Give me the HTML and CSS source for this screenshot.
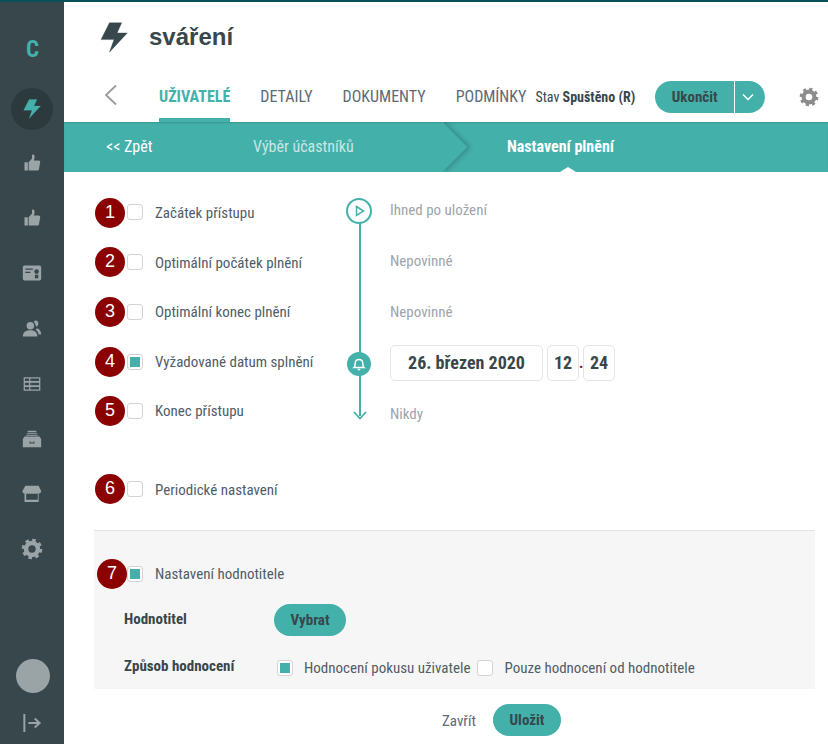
FILE: index.html
```html
<!DOCTYPE html>
<html lang="cs">
<head>
    <meta charset="UTF-8">
    <title>sváření</title>
    <link rel="stylesheet" href="styles.css">
</head>
<body>
<div class="app">
    <!-- left menu -->
    <nav class="sidebar">
        <div class="brand">C</div>
        <div class="side-item side-active">
            <svg class="side-bolt" viewBox="0 0 80 88"><polygon points="27,2 62,2 49,31 78,31 27,86 40,50 3,50"/></svg>
        </div>
        <div class="side-item">
            <svg class="side-icon" viewBox="0 0 24 24"><path d="M3 11h4v10H3zM8 11l4-4.500V2.500c0-1 2.500-1 3 1 .4 1.700-.2 3.500-.7 5.500H20c1.300 0 2 1 1.800 2.200l-1.400 8.300c-.2 1-1 1.500-2 1.500H8z"/></svg>
        </div>
        <div class="side-item">
            <svg class="side-icon" viewBox="0 0 24 24"><path d="M3 11h4v10H3zM8 11l4-4.500V2.500c0-1 2.500-1 3 1 .4 1.700-.2 3.500-.7 5.500H20c1.300 0 2 1 1.800 2.200l-1.400 8.300c-.2 1-1 1.500-2 1.500H8z"/></svg>
        </div>
        <div class="side-item">
            <svg class="side-icon" viewBox="0 0 24 24"><path fill-rule="evenodd" d="M3 3h18a2 2 0 0 1 2 2v14a2 2 0 0 1-2 2H3a2 2 0 0 1-2-2V5a2 2 0 0 1 2-2zm1 3.500V8h9V6.500zm0 4V12h6v-1.500zm13.500-3a2.800 2.800 0 1 0 0 5.600 2.800 2.800 0 0 0 0-5.600zM15.500 14v5l2-1 2 1v-5z"/></svg>
        </div>
        <div class="side-item">
            <svg class="side-icon" viewBox="0 0 24 24"><circle cx="10" cy="8" r="4.500"/><path d="M1 21c0-5 3-7.500 9-7.500s8 2.500 8.500 7.500z"/><path d="M14 3c3-2.500 6-.5 5.500 3-.2 1.500-.8 2.500-1.800 3.200C16.500 9 16 5 14 3zM18 11c3 1 5 3.500 5 7.500h-3c-.5-2.500-1.500-4-3.500-5.500z"/></svg>
        </div>
        <div class="side-item">
            <svg class="side-icon" viewBox="0 0 24 24"><path fill-rule="evenodd" d="M2 4h20v16H2zm1.500 1.500v3h5v-3zm6.500 0v3h10.500v-3zM3.500 10.500v3h5v-3zm6.500 0v3h10.500v-3zM3.500 15.500v3h5v-3zm6.500 0v3h10.500v-3z"/></svg>
        </div>
        <div class="side-item">
            <svg class="side-icon" viewBox="0 0 24 24"><path fill-rule="evenodd" d="M1 12l2-3h18l2 3v10H1zm8 3v2.500h6V15h-1.300v1.200h-3.400V15zM5 7.500h14l.6 1H4.400zM6 5h12l.5 1.200h-13zM7 2h10l.5 1.800h-11z"/></svg>
        </div>
        <div class="side-item">
            <svg class="side-icon" viewBox="0 0 24 24"><path fill-rule="evenodd" d="M4 2h16l3 6.500c0 2-1.500 3-3 3v10H3v-10c-1.500 0-2.500-1-2.500-3zm2.500 9.500c-.5.300-1 .5-1.500.4v7.100h14v-7.100c-.5 0-1-.1-1.500-.4-1 .8-1.800.8-2.700 0-1 .8-1.800.8-2.800 0-1 .8-1.800.8-2.800 0-.8.800-1.700.8-2.700 0z"/></svg>
        </div>
        <div class="side-item">
            <svg class="side-icon side-gear" viewBox="0 0 24 24"><circle cx="12" cy="12" r="6.500" class="gear-ring"/><circle cx="12" cy="12" r="9.500" class="gear-teeth"/></svg>
        </div>
        <div class="side-bottom">
            <div class="avatar"></div>
            <svg class="logout" viewBox="0 0 20 20"><path d="M1.500 0v20"/><path d="M6 10h12.500M13 5l5.500 5-5.500 5"/></svg>
        </div>
    </nav>

    <main class="main">
        <header class="title-row">
            <svg class="title-bolt" viewBox="0 0 80 88"><polygon points="27,2 62,2 49,31 78,31 27,86 40,50 3,50"/></svg>
            <h1>sváření</h1>
        </header>

        <div class="tabs">
            <svg class="back" viewBox="0 0 14 22"><path d="M12 1.500L2 11l10 9.500"/></svg>
            <a class="tab tab-active">UŽIVATELÉ</a>
            <a class="tab">DETAILY</a>
            <a class="tab">DOKUMENTY</a>
            <a class="tab">PODMÍNKY</a>
            <div class="state">Stav <b>Spuštěno (R)</b></div>
            <div class="split-btn">
                <span class="split-main">Ukončit</span>
                <span class="split-arrow"><svg viewBox="0 0 12 8"><path d="M1 1.500l5 5 5-5"/></svg></span>
            </div>
            <svg class="tab-gear" viewBox="0 0 24 24"><circle cx="12" cy="12" r="6.500" class="gear-ring"/><circle cx="12" cy="12" r="9.500" class="gear-teeth"/></svg>
        </div>

        <div class="steps">
            <div class="step-arrow"></div>
            <a class="step-back">&lt;&lt; Zpět</a>
            <span class="step-prev">Výběr účastníků</span>
            <span class="step-current">Nastavení plnění</span>
        </div>

        <section class="form">
            <div class="timeline">
                <div class="tl-line"></div>
                <svg class="tl-end" viewBox="0 0 14 9"><path d="M1 1l6 6.500L13 1"/></svg>

                <div class="row row-1">
                    <span class="badge">1</span>
                    <span class="check"></span>
                    <span class="label">Začátek přístupu</span>
                    <span class="node node-play"><svg viewBox="0 0 10 12"><path d="M1.500 1.500l7 4.500-7 4.500z"/></svg></span>
                    <span class="value">Ihned po uložení</span>
                </div>
                <div class="row row-2">
                    <span class="badge">2</span>
                    <span class="check"></span>
                    <span class="label">Optimální počátek plnění</span>
                    <span class="node"></span>
                    <span class="value">Nepovinné</span>
                </div>
                <div class="row row-3">
                    <span class="badge">3</span>
                    <span class="check"></span>
                    <span class="label">Optimální konec plnění</span>
                    <span class="node"></span>
                    <span class="value">Nepovinné</span>
                </div>
                <div class="row row-4">
                    <span class="badge">4</span>
                    <span class="check checked"></span>
                    <span class="label">Vyžadované datum splnění</span>
                    <span class="node node-bell"><svg viewBox="0 0 14 14"><path d="M2 10.500c1-1 1.200-2 1.200-4C3.200 4 5 2.500 7 2.500s3.800 1.500 3.800 4c0 2 .2 3 1.200 4zM5.800 12.500h2.400"/></svg></span>
                    <span class="date-box date-main">26. březen 2020</span>
                    <span class="date-box date-time">12</span>
                    <span class="date-dot">.</span>
                    <span class="date-box date-time">24</span>
                </div>
                <div class="row row-5">
                    <span class="badge">5</span>
                    <span class="check"></span>
                    <span class="label">Konec přístupu</span>
                    <span class="node"></span>
                    <span class="value">Nikdy</span>
                </div>
            </div>

            <div class="row row-6">
                <span class="badge">6</span>
                <span class="check"></span>
                <span class="label">Periodické nastavení</span>
            </div>

            <div class="panel">
                <div class="row row-7">
                    <span class="badge badge-7">7</span>
                    <span class="check checked"></span>
                    <span class="label">Nastavení hodnotitele</span>
                </div>
                <div class="panel-row panel-row-1">
                    <span class="panel-label">Hodnotitel</span>
                    <a class="btn">Vybrat</a>
                </div>
                <div class="panel-row panel-row-2">
                    <span class="panel-label">Způsob hodnocení</span>
                    <span class="check checked"></span>
                    <span class="opt">Hodnocení pokusu uživatele</span>
                    <span class="check"></span>
                    <span class="opt">Pouze hodnocení od hodnotitele</span>
                </div>
            </div>

            <div class="actions">
                <a class="close">Zavřít</a>
                <a class="btn btn-save">Uložit</a>
            </div>
        </section>
    </main>
</div>
</body>
</html>
```

FILE: styles.css
```css
body {
    margin: 0;
    background-color: white;
    font-family: "Roboto Condensed", Roboto, sans-serif;
    font-stretch: 75%;
    font-size: 14px;
    color: #37474b;
}

.app {
    display: flex;
    height: 744px;
    overflow: hidden;
    border-top: 2px solid #07505a;
    box-sizing: border-box;
}

/* left menu */
.sidebar {
    width: 64px;
    flex: none;
    background-color: #37474b;
    display: flex;
    flex-direction: column;
    align-items: center;
    margin-top: -2px;
    padding-top: 2px;
}
.brand {
    margin-top: 36px;
    margin-left: 1px;
    height: 24px;
    font-size: 23px;
    font-weight: 700;
    line-height: 24px;
    color: #44b0aa;
}
.side-item {
    width: 42px;
    height: 42px;
    margin-bottom: 13.200px;
    display: flex;
    align-items: center;
    justify-content: center;
    flex: none;
}
.side-active {
    margin-top: 26px;
    margin-bottom: 12px;
    border-radius: 50%;
    background-color: #2c3a3e;
}
.side-bolt {
    width: 18px;
    height: 20px;
    fill: #44b0aa;
    stroke: #44b0aa;
}
.side-icon {
    width: 20px;
    height: 20px;
    fill: #9aa3a5;
}
.gear-ring {
    fill: none;
    stroke: #9aa3a5;
    stroke-width: 5;
}
.gear-teeth {
    fill: none;
    stroke: #9aa3a5;
    stroke-width: 3.500;
    stroke-dasharray: 3.730;
}
.side-gear {
    width: 22px;
    height: 22px;
}
.side-bottom {
    margin-top: auto;
    display: flex;
    flex-direction: column;
    align-items: center;
    padding-bottom: 12px;
}
.avatar {
    width: 34px;
    height: 34px;
    border-radius: 50%;
    background-color: #9aa3a5;
    margin-left: 2px;
    margin-bottom: 21px;
}
.logout {
    width: 20px;
    height: 18px;
    fill: none;
    stroke: #9aa3a5;
    stroke-width: 2.200;
}

/* header */
.main {
    flex: 1;
    min-width: 0;
}
.title-row {
    display: flex;
    align-items: center;
    height: 70px;
    padding-left: 36px;
}
.title-bolt {
    width: 28px;
    height: 31px;
    fill: #37474b;
    stroke: #37474b;
    margin-right: 21px;
}
h1 {
    margin: 0;
    font-family: "Liberation Sans", sans-serif;
    font-stretch: normal;
    font-size: 24px;
    font-weight: 700;
    color: #37474b;
}

.tabs {
    display: flex;
    align-items: center;
    height: 50px;
    padding-left: 40px;
}
.back {
    width: 14px;
    height: 22px;
    fill: none;
    stroke: #9a9a9a;
    stroke-width: 1.800;
    margin-right: 41px;
    margin-top: -4px;
}
.tab {
    font-size: 16px;
    line-height: 50px;
    height: 50px;
    margin-right: 30px;
    color: #5c6a75;
    box-sizing: border-box;
}
.tab:nth-of-type(4) {
    margin-right: 9px;
}
.tab-active {
    color: #44b0aa;
    font-weight: 700;
    border-bottom: 4px solid #44b0aa;
}
.state {
    font-size: 14px;
    margin-right: 20px;
    color: #37474b;
}
.split-btn {
    display: flex;
    height: 32px;
    border-radius: 16px;
    overflow: hidden;
    font-weight: 700;
    font-size: 15px;
    line-height: 33px;
    color: #37474b;
}
.split-main {
    width: 79px;
    background-color: #44b0aa;
    text-align: center;
}
.split-arrow {
    width: 30px;
    margin-left: 1px;
    background-color: #44b0aa;
    display: flex;
    align-items: center;
    justify-content: center;
}
.split-arrow svg {
    width: 12px;
    height: 8px;
    fill: none;
    stroke: white;
    stroke-width: 1.500;
    margin-right: 4px;
}
.tab-gear {
    width: 20px;
    height: 20px;
    margin-left: 34px;
}
.tab-gear circle {
    stroke: #8c8c8c;
}

/* step bar */
.steps {
    position: relative;
    height: 50px;
    padding-bottom: 2px;
    box-sizing: border-box;
    overflow: hidden;
    background-color: #44b0aa;
    box-shadow: inset 0 2px 2px -1px rgba(0, 0, 0, .15);
    display: flex;
    align-items: center;
    font-size: 16px;
    color: white;
}
.steps::after {
    content: "";
    position: absolute;
    left: 496px;
    bottom: 0;
    border: 8px solid transparent;
    border-top: 0;
    border-bottom: 5px solid white;
}
/* only the right half of the turned square shows */
.step-arrow {
    position: absolute;
    left: 378px;
    top: 0;
    width: 40px;
    height: 50px;
    overflow: hidden;
}
.step-arrow::before {
    content: "";
    position: absolute;
    left: -18px;
    top: 7px;
    width: 36px;
    height: 36px;
    background-color: #44b0aa;
    transform: rotate(45deg);
    box-shadow: 2px -2px 5px rgba(0, 0, 0, .22);
}
.step-back {
    position: relative;
    margin-left: 42px;
    width: 147px;
}
.step-prev {
    position: relative;
    color: #c7e7e5;
    width: 185px;
}
.step-current {
    margin-left: 69px;
    font-weight: 700;
}

/* form */
.form {
    padding-top: 15px;
}
.timeline {
    position: relative;
}
.tl-line {
    position: absolute;
    left: 295px;
    top: 24px;
    height: 205px;
    width: 2px;
    background-color: #44b0aa;
}
.tl-end {
    position: absolute;
    left: 289px;
    top: 224px;
    width: 14px;
    height: 9px;
    fill: none;
    stroke: #44b0aa;
    stroke-width: 1.800;
}
.row {
    display: flex;
    align-items: center;
    padding-left: 31px;
    height: 50px;
    font-size: 15px;
    position: relative;
}
.row-3 {
    height: 49px;
}
.row-4 {
    height: 51px;
}
.row-5 {
    height: 48px;
}
.row-1 .label,
.row-2 .label,
.row-6 .label {
    margin-top: 2px;
}
.row-1 .value {
    margin-top: -4px;
}
.row-2 .value {
    margin-top: -2px;
}
.row-5 .value {
    margin-top: 6px;
}
.badge {
    width: 30px;
    height: 30px;
    flex: none;
    border-radius: 50%;
    background-color: #8b0000;
    color: white;
    font-family: "Liberation Sans", sans-serif;
    font-stretch: normal;
    font-size: 18px;
    line-height: 29px;
    text-align: center;
}
.row-1 .badge {
    margin-top: 2px;
}
.badge-7 {
    margin-left: 2px;
    margin-right: -2px;
}
.check {
    width: 14px;
    height: 14px;
    flex: none;
    border: 1px solid #d4d4d4;
    border-radius: 3px;
    background-color: white;
    margin-left: 2px;
    position: relative;
}
.checked::after {
    content: "";
    position: absolute;
    left: 2px;
    top: 2px;
    width: 10px;
    height: 10px;
    background-color: #44b0aa;
}
.label {
    width: 191px;
    margin-left: 12px;
    color: #4f5d68;
    flex: none;
}
.node {
    position: relative;
    width: 26px;
    height: 26px;
    flex: none;
    margin-right: 18px;
    border-radius: 50%;
    display: flex;
    align-items: center;
    justify-content: center;
    box-sizing: border-box;
}
.node-play {
    border: 2px solid #44b0aa;
    background-color: white;
    margin-top: -3px;
}
.node-play svg {
    width: 10px;
    height: 12px;
    fill: none;
    stroke: #44b0aa;
    stroke-width: 1.500;
    margin-left: 2px;
}
.node-bell {
    width: 24px;
    height: 24px;
    margin: 4px 19px 0 1px;
    background-color: #44b0aa;
}
.node-bell svg {
    width: 14px;
    height: 14px;
    fill: none;
    stroke: white;
    stroke-width: 1.500;
}
.value {
    color: #9ea4ab;
}
.date-box {
    height: 36px;
    margin-top: 2px;
    box-sizing: border-box;
    border: 1px solid #e4e4e4;
    border-radius: 5px;
    background-color: white;
    text-align: center;
    line-height: 34px;
    font-size: 18px;
    font-weight: 700;
    color: #37474b;
}
.date-main {
    width: 153px;
    margin-right: 4px;
}
.date-time {
    width: 32px;
}
.date-dot {
    width: 4px;
    margin-top: 2px;
    color: #5a2a32;
    text-align: center;
    font-weight: 700;
}
.row-6 {
    margin-top: 29px;
}
.panel {
    margin: 16px 13px 0 30px;
    padding-top: 18px;
    height: 140px;
    background-color: #f6f6f6;
    border-top: 1px solid #e2e2e2;
}
.panel .row {
    padding-left: 1px;
}
.panel-row {
    display: flex;
    align-items: center;
    padding-left: 30px;
    font-size: 15px;
}
.panel-row-1 {
    height: 40px;
    margin-top: 1px;
}
.panel-row-2 {
    height: 40px;
    margin-top: 8px;
}
.panel-label {
    width: 150px;
    font-weight: 700;
    color: #37474b;
    flex: none;
}
.panel-row-1 .panel-label {
    margin-top: -2px;
}
.panel-row-2 .panel-label {
    width: 151px;
    margin-top: -4px;
}
.opt {
    margin: 0 5px 0 11px;
    color: #4f5d68;
}
.btn {
    display: block;
    width: 72px;
    height: 32px;
    border-radius: 16px;
    background-color: #44b0aa;
    font-size: 15px;
    font-weight: 700;
    line-height: 33px;
    text-align: center;
    color: #37474b;
}
.actions {
    display: flex;
    align-items: center;
    padding-top: 15px;
    padding-left: 378px;
}
.close {
    color: #5c6a75;
    width: 35px;
    margin-top: 2px;
    margin-right: 16px;
    font-size: 15px;
}
.btn-save {
    width: 68px;
}
```
